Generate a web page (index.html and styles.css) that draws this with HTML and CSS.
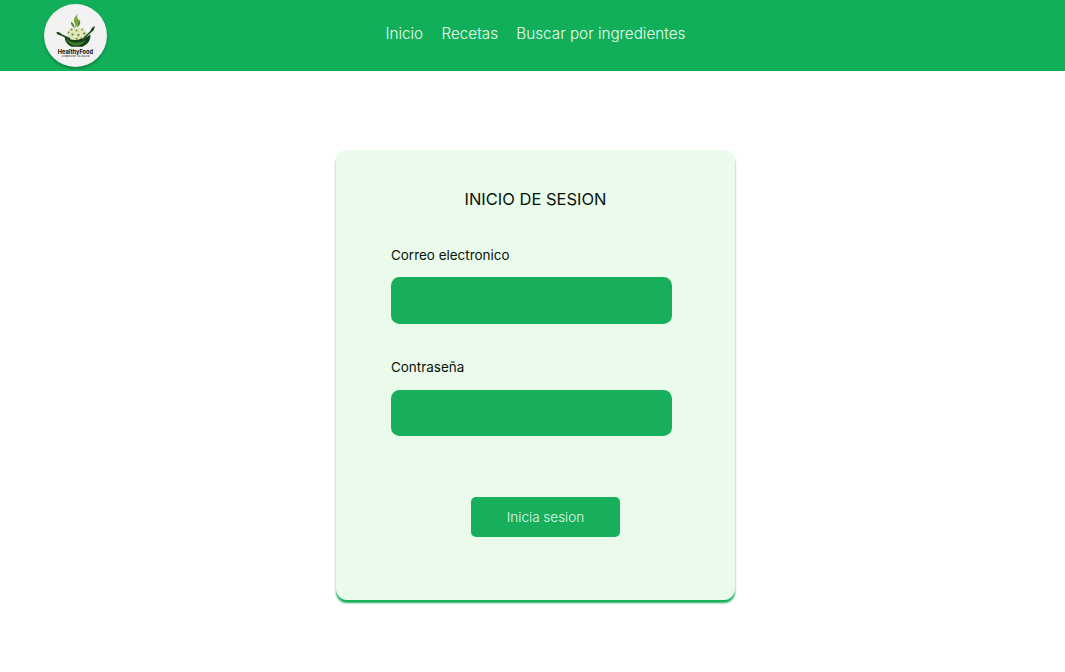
FILE: index.html
```html
<!DOCTYPE html>
<html lang="es">
<head>
<meta charset="utf-8">
<title>HealthyFood</title>
<link rel="stylesheet" href="styles.css">
</head>
<body>
<header class="header">
  <a class="logo">
    <svg class="logo-art" viewBox="0 0 64 64" role="img" aria-label="HealthyFood">
      <!-- leaf and herbs -->
      <path fill="#7ea43c" d="M34 10C31 14 29.500 16 31 19C32 21 32 22 31 24C36 21 36.500 18 34.500 15.500C33.500 14 33.500 12 34 10Z"/>
      <path fill="#4f8428" d="M35 15C36 18 35 20 33 24C38 21 37.500 18 35 15ZM27.500 18C27 20 28 22 31 24.500C31 21 29.500 19 27.500 18Z"/>
      <!-- bowl filling -->
      <path fill="#e4e6c0" d="M23 31L25 26L29 24.500L35 24L41 26L44 30L43 35L36 38L27 37Z"/>
      <g fill="#769445">
        <circle cx="28" cy="26" r="1.100"/><circle cx="33" cy="27" r="1"/><circle cx="39" cy="26" r="1"/>
        <circle cx="25" cy="29" r="1"/><circle cx="29" cy="31" r="1.200"/><circle cx="35" cy="31.500" r="1.200"/><circle cx="41" cy="30" r="1.200"/>
        <circle cx="33" cy="35" r="1"/><circle cx="38" cy="35" r="1.100"/>
      </g>
      <!-- bowl -->
      <path fill="#103f18" d="M21 33C27 38 38 38 47 31C48 37 44 41 39 43.500H28C23 41 21 37 21 33Z"/>
      <path fill="#427b2c" d="M22 35C28 40.500 37 40.500 43 36C40 41 36 42.500 31 42.500C27 41.500 24 39 22 35Z"/>
      <!-- salad servers -->
      <path class="server" d="M14 30L26 35M41 34L50 26"/>
      <path fill="#174b20" d="M12.500 29C14 27.800 17 29 18 31C16 32 13.500 31 12.500 29ZM47 28C47.500 25 50 22.500 51.500 22.500C52 24 50.500 27 47 28Z"/>
      <text class="logo-name" x="32" y="50.300" textLength="36" lengthAdjust="spacingAndGlyphs">HealthyFood</text>
      <text class="logo-slogan" x="32" y="54" textLength="28">COMPANY SLOGAN</text>
    </svg>
  </a>
  <nav class="nav">
    <a>Inicio</a>
    <a>Recetas</a>
    <a>Buscar por ingredientes</a>
  </nav>
</header>
<main class="main">
  <form class="card">
    <h1 class="title">INICIO DE SESION</h1>
    <label class="label" for="email">Correo electronico</label>
    <input class="field" id="email" type="email">
    <label class="label" for="password">Contraseña</label>
    <input class="field" id="password" type="password">
    <button class="submit" type="button">Inicia sesion</button>
  </form>
</main>
</body>
</html>
```
FILE: styles.css
```css
* { box-sizing: border-box; }
body { margin: 0; min-height: 100vh; background: #fff; color: #07120b; font-family: Inter, sans-serif; }
.header {
  display: grid;
  grid-template-columns: 342px 1fr;
  height: 71px;
  padding-left: 43.500px;
  background: #12af5a;
}
.logo {
  width: 63px;
  height: 63px;
  margin-top: 3.500px;
  border-radius: 50%;
  background: #f1f2f1;
  box-shadow: 0 2px 3px rgba(0, 60, 25, .4);
}
.logo-art { display: block; width: 100%; height: 100%; }
.server { fill: none; stroke: #174b20; stroke-width: 1.500; stroke-linecap: round; }
.logo-name { font: 700 5.800px Inter, sans-serif; text-anchor: middle; fill: #111; }
.logo-slogan { font: 600 2.400px Inter, sans-serif; text-anchor: middle; fill: #333; }
.nav {
  display: flex;
  gap: 18.300px;
  padding-top: 24px;
  font-size: 15.250px;
  font-weight: 300;
  line-height: 20px;
  color: #e9fbef;
  white-space: nowrap;
}
.main { display: flex; justify-content: center; padding: 79px 0 0 6px; }
.card {
  display: flex;
  flex-direction: column;
  width: 399px;
  height: 450px;
  padding: 39px 55px 0;
  border-radius: 11px;
  background: #ebfbeb;
  box-shadow: 0 3px 2px #18ae5d;
}
.title { margin: 0 0 36px; text-align: center; font-size: 16.500px; font-weight: 400; line-height: 20px; }
.label { margin-bottom: 12.400px; font-size: 13.450px; line-height: 20px; }
.field {
  width: 281px;
  height: 46.500px;
  margin: 0 0 33px;
  padding: 0 14px;
  border: 0;
  border-radius: 8.500px;
  background: #17ae5c;
  color: #fff;
  font: inherit;
  flex: none;
}
.label + .field + .label { margin-bottom: 13px; }
.submit {
  width: 149px;
  height: 40px;
  margin: 27.500px 0 0 80px;
  padding: 0;
  border: 0;
  border-radius: 5px;
  background: #17ae5c;
  color: #e4faeb;
  font: 300 13.500px/20px Inter, sans-serif;
}
```
